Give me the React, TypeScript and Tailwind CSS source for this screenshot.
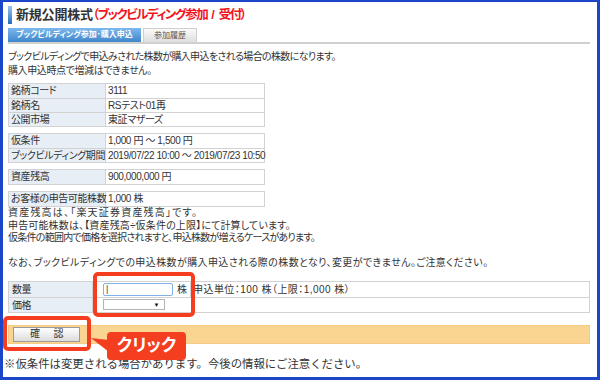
import React from "react";

const infoTables: [string, string][][] = [
  [
    ["銘柄コード", "3111"],
    ["銘柄名", "RSテスト01再"],
    ["公開市場", "東証マザーズ"],
  ],
  [
    ["仮条件", "1,000 円 ～ 1,500 円"],
    ["ブックビルディング期間", "2019/07/22 10:00 ～ 2019/07/23 10:50"],
  ],
  [["資産残高", "900,000,000 円"]],
  [["お客様の申告可能株数", "1,000 株"]],
];

function InfoTable({ rows, className }: { rows: [string, string][]; className: string }) {
  return (
    <div className={`w-[257px] border border-[#d2d2d2] ${className}`}>
      {rows.map(([label, value], i) => (
        <div key={label} className={`flex h-[14px] ${i > 0 ? "border-t border-[#d2d2d2]" : ""}`}>
          <div className="w-[97px] shrink-0 whitespace-nowrap border-r border-[#d2d2d2] bg-[#e8eef5] pl-[2px] leading-[14px]">
            {label}
          </div>
          <div className="whitespace-nowrap pl-[2px] leading-[14px]">{value}</div>
        </div>
      ))}
    </div>
  );
}

export default function App() {
  return (
    <div className="relative h-[380px] w-[600px] overflow-hidden border-x-[3px] border-b-[3px] border-t-[2px] border-[#1b46c9] bg-white pl-[5px] pr-[7px] font-['Liberation_Sans','Noto_Sans_CJK_JP',sans-serif] text-[10px] tracking-[-0.4px] text-[#333] [font-feature-settings:'palt']">
      {/* title */}
      <div className="box-content flex h-[19px] items-center pt-[3px]">
        <div className="h-[18px] w-[4px] bg-gradient-to-b from-[#9cc6ee] to-[#1f6cc0]" />
        <h1 className="ml-[4px] whitespace-pre text-[13px] font-bold leading-none tracking-[-0.2px]">
          新規公開株式
          <span className="text-[12.5px] tracking-[-1.5px] text-[#f0141e]">
            （ブックビルディング参加<span className="mx-[4px] tracking-normal">/</span>受付）
          </span>
        </h1>
      </div>

      {/* tabs */}
      <div className="mt-[4px] flex h-[16px] items-end gap-[2px] border-b-2 border-[#d0d0d0] tracking-normal">
        <div className="flex h-[14px] w-[133px] items-center justify-center bg-gradient-to-b from-[#7cb8ec] to-[#3f86cc] text-[8px] font-bold text-white">
          ブックビルディング参加･購入申込
        </div>
        <div className="flex h-[14px] w-[54px] items-center justify-center border border-b-0 border-[#cfcfcf] bg-gradient-to-b from-[#fafafa] to-[#dedede] text-[8px] text-[#555]">
          参加履歴
        </div>
      </div>

      <p className="mt-[6px] leading-[14px]">
        <span className="tracking-[-0.65px]">ブックビルディングで申込みされた株数が購入申込をされる場合の株数になります。</span>
        <br />
        購入申込時点で増減はできません。
      </p>

      <InfoTable rows={infoTables[0]} className="mt-[5px]" />
      <InfoTable rows={infoTables[1]} className="mt-[6px]" />
      <InfoTable rows={infoTables[2]} className="mt-[6px]" />
      <InfoTable rows={infoTables[3]} className="mt-[6px]" />

      <div className="leading-[12.5px]">
        <p className="tracking-[1.2px]">資産残高は、「楽天証券資産残高」です。</p>
        <p className="tracking-[0.15px]">申告可能株数は、【資産残高÷仮条件の上限】にて計算しています。</p>
        <p className="tracking-[-0.75px]">仮条件の範囲内で価格を選択されますと、申込株数が増えるケースがあります。</p>
        <p className="mt-[12.5px] tracking-[0.4px]">
          なお、ブックビルディングでの申込株数が購入申込される際の株数となり、変更ができません。ご注意ください。
        </p>
      </div>

      {/* order form */}
      <div className="mt-[11px] border border-[#d2d2d2]">
        <div className="flex h-[15px]">
          <div className="w-[84px] shrink-0 border-r border-[#d2d2d2] bg-[#e8eef5] pl-[3px] leading-[15px]">数量</div>
          <div className="flex w-[98px] shrink-0 items-center border-r border-[#d2d2d2] pl-[10px]">
            <div className="h-[13px] w-[70px] rounded-[2px] border border-[#7fb2e8] pl-[2px] text-[9px] leading-[11px] text-[#444]">|</div>
            <span className="ml-[4px]">株</span>
          </div>
          <div className="pl-[2px] leading-[15px] tracking-[0.45px]">申込単位：100 株（上限：1,000 株）</div>
        </div>
        <div className="flex h-[15px] border-t border-[#d2d2d2]">
          <div className="w-[84px] shrink-0 border-r border-[#d2d2d2] bg-[#e8eef5] pl-[3px] leading-[15px]">価格</div>
          <div className="flex items-center pl-[10px]">
            <div className="flex h-[11px] w-[62px] items-center justify-end border border-[#b5b5b5] pr-[5px] text-[6px] leading-none text-[#111]">
              ▼
            </div>
          </div>
        </div>
      </div>

      <div className="mt-[12px] flex h-[19px] items-center border border-[#f8cb84] bg-[#fad591] pl-[4px]">
        <button
          type="button"
          className="flex h-[15px] w-[67px] items-center justify-center gap-[14px] border border-[#9a9a9a] bg-gradient-to-b from-[#ffffff] to-[#dcdcdc] text-[10px] leading-none text-[#333]"
        >
          <span>確</span>
          <span>認</span>
        </button>
      </div>

      <p className="-ml-[4px] mt-[14px] text-[11.4px] leading-[13px] tracking-normal [font-feature-settings:normal]">
        ※仮条件は変更される場合があります。今後の情報にご注意ください。
      </p>

      {/* highlight overlays */}
      <div className="absolute left-[90px] top-[270px] h-[45px] w-[102px] rounded-[5px] border-[4px] border-[#f53d1f]" />
      <div className="absolute left-0 top-[314px] h-[35px] w-[88px] rounded-[5px] border-[4px] border-[#f53d1f]" />
      <svg className="absolute left-[86px] top-[330px]" width="22" height="24" viewBox="0 0 22 24">
        <polygon points="2,6 20,8 20,20" fill="#f53d1f" />
      </svg>
      <div className="absolute left-[104px] top-[330px] flex h-[28px] w-[79px] items-center justify-center rounded-[4px] bg-[#f53d1f] text-[17px] font-bold tracking-normal text-white">
        クリック
      </div>
    </div>
  );
}
